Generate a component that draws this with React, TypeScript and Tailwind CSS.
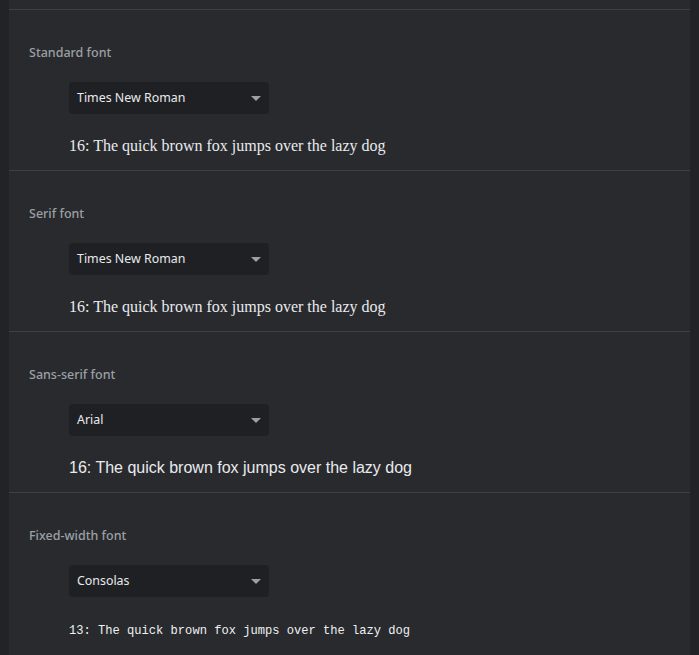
const sections = [
  { label: "Standard font", value: "Times New Roman", sample: "16: The quick brown fox jumps over the lazy dog", kind: "serif" },
  { label: "Serif font", value: "Times New Roman", sample: "16: The quick brown fox jumps over the lazy dog", kind: "serif" },
  { label: "Sans-serif font", value: "Arial", sample: "16: The quick brown fox jumps over the lazy dog", kind: "sans" },
  { label: "Fixed-width font", value: "Consolas", sample: "13: The quick brown fox jumps over the lazy dog", kind: "mono" },
];

function Select({ value }: { value: string }) {
  return (
    <div className="flex h-8 w-[200px] items-center justify-between rounded bg-[#1f2023] pl-2 pr-[8px]">
      <span className="pt-[1px] text-[12.4px] text-[#e8eaed]">{value}</span>
      {/* dropdown arrow */}
      <svg width="10" height="6" viewBox="0 0 10 6" className="mt-[1px]">
        <path d="M0 0 L10 0 L5 5 Z" fill="#9aa0a6" />
      </svg>
    </div>
  );
}

export default function App() {
  return (
    <div
      className="flex h-[655px] w-[699px] bg-[#222327]"
      style={{ fontFamily: '"Noto Sans", "Segoe UI", sans-serif' }}
    >
      <div className="ml-[9px] w-[681px] bg-[#292a2d]">
        <div className="h-[9px]" />
        {sections.map((s) => (
          <div key={s.label} className="border-t border-[#3f4044] pb-3 pt-[33px]">
            <div className="h-5 pl-5 text-[12.5px] font-medium leading-5 text-[#9aa0a6]">{s.label}</div>
            <div className="mt-[19px] pl-[60px]">
              <Select value={s.value} />
              <div
                className={
                  s.kind === "serif"
                    ? "mt-5 h-6 text-[16px] leading-6 text-[#e8eaed] [font-family:'Liberation_Serif',serif]"
                    : s.kind === "sans"
                    ? "mt-5 h-6 text-[16px] leading-6 text-[#e8eaed] [font-family:'Liberation_Sans',sans-serif]"
                    : "mt-5 h-6 pt-[2px] text-[12.1px] leading-6 text-[#eef0f2] [font-family:'Liberation_Mono',monospace]"
                }
              >
                {s.sample}
              </div>
            </div>
          </div>
        ))}
      </div>
    </div>
  );
}
